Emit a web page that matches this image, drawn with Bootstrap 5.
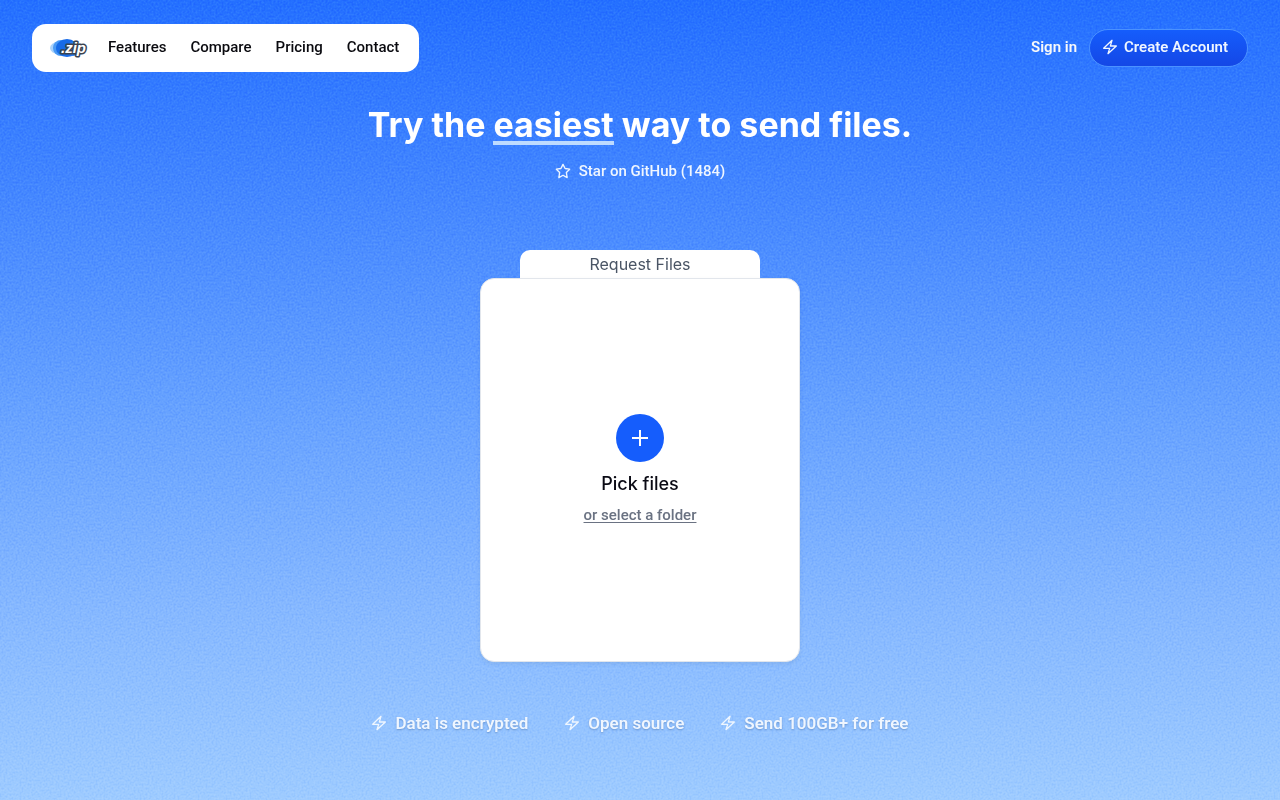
<!DOCTYPE html>
<html lang="en">
<head>
<meta charset="utf-8">
<meta name="viewport" content="width=device-width, initial-scale=1">
<title>.zip – send files</title>
<link href="https://cdn.jsdelivr.net/npm/bootstrap@5.3.0/dist/css/bootstrap.min.css" rel="stylesheet">
<style>
  body {
    font-family: Inter, "Liberation Sans", sans-serif;
    font-size: 14px;
    line-height: 20px;
    background: linear-gradient(#2470ff 0%, #4185ff 22%, #65a1ff 50%, #86b8ff 76%, #9ecbff 100%) no-repeat #9ecbff;
  }
  .grain { z-index: -1; opacity: .18; mix-blend-mode: soft-light; }
  .page-bar { padding: 24px 32px 0; }
  .menu-pill { height: 48px; padding: 0 20px 2px 18px; border-radius: 14px; gap: 24px; }
  .menu-pill a { color: #0a0a0f; font-family: Roboto, sans-serif; font-size: 15px; font-weight: 500; text-decoration: none; }
  .menu-pill .logo { margin-right: -4px; }
  .sign-in { padding-bottom: 2px; font-family: Roboto, sans-serif; font-size: 15px; font-weight: 600; }
  .btn-account {
    height: 38px; padding: 0 19px 2px 12px; border-radius: 19px; gap: 6px;
    color: #eff6ff; font-family: Roboto, sans-serif; font-size: 15px; font-weight: 600;
    border: 1px solid #4b92ff; background: linear-gradient(#155dfc, #1447e6);
  }
  .btn-account:hover { color: #fff; border-color: #8ec5ff; background: #155dfc; }
  .headline { font-family: Inter, sans-serif; font-size: 34px; line-height: 40px; font-weight: 700; margin: 33px 0 0; }
  .swash { background: linear-gradient(#bedbff, #bedbff) 0 100% / 100% 4px no-repeat; }
  .star-link { margin-top: 16px; gap: 8px; color: #eff6ff; font-family: Roboto, sans-serif; font-size: 15px; font-weight: 500; }
  .uploader { width: 320px; margin-top: 69px; }
  .tab-request {
    width: 240px; height: 28px; padding: 0; color: #4a5565;
    font-size: 16px; line-height: 28px; background: #fff; border: 0; border-radius: 10px 10px 0 0;
  }
  .drop-card { height: 384px; border: 1px solid #e2e6ec; border-radius: 14px; padding-bottom: 2px; }
  .btn-plus { width: 48px; height: 48px; color: #fff; background: #155dfc; border: 0; }
  .pick-title { margin: 8px 0 0; color: #0a0a14; font-size: 18px; line-height: 28px; font-weight: 500; }
  .folder-link { margin-top: 7px; color: #6a7282; font-family: Roboto, sans-serif; font-size: 15px; font-weight: 500; background: none; border: 0; padding: 0; text-decoration: underline; text-underline-offset: 2px; }
  .perks { margin: 49px 0 64px; gap: 36px; color: #eff6ff; font-family: Roboto, sans-serif; font-size: 17px; line-height: 24px; font-weight: 600; text-shadow: 0 1px 2px rgba(20, 60, 120, .35); }
  .perks li { gap: 8px; }
</style>
</head>
<body class="min-vh-100">
<svg class="grain position-fixed top-0 start-0 w-100 h-100" aria-hidden="true">
  <filter id="grain" x="0" y="0" width="100%" height="100%" color-interpolation-filters="sRGB">
    <feTurbulence type="fractalNoise" baseFrequency=".5" numOctaves="3" stitchTiles="stitch"/>
    <feColorMatrix values="2 0 0 0 -.5  2 0 0 0 -.5  2 0 0 0 -.5  0 0 0 0 1"/>
  </filter>
  <rect width="100%" height="100%" filter="url(#grain)"/>
</svg>
<svg class="d-none" aria-hidden="true">
  <symbol id="bolt" viewBox="0 0 24 24" fill="none" stroke="currentColor" stroke-width="2" stroke-linecap="round" stroke-linejoin="round"><path d="M2.500 14L15 2l-2.500 8.500h9L9 22l2.500-8z"/></symbol>
</svg>

<header class="page-bar d-flex flex-wrap align-items-center justify-content-between">
  <nav class="menu-pill bg-white d-flex align-items-center" aria-label="Main">
    <a class="logo d-flex" href="#" aria-label=".zip">
      <svg width="38" height="22" viewBox="0 0 38 22">
        <ellipse cx="8" cy="12" rx="8" ry="6" fill="#a9d2fb"/>
        <ellipse cx="11" cy="12" rx="8" ry="8" fill="#4a9af5"/>
        <ellipse cx="17" cy="12" rx="11" ry="9" fill="#176be8"/>
        <ellipse cx="23" cy="13" rx="7" ry="7" fill="#2b7cf0"/>
        <text x="11" y="17" font-family="Liberation Sans, sans-serif" font-size="15" font-weight="700" font-style="italic" fill="#fff" stroke="#3a4250" stroke-width="3" stroke-linejoin="round" paint-order="stroke">.zip</text>
      </svg>
    </a>
    <a href="#">Features</a>
    <a href="#">Compare</a>
    <a href="#">Pricing</a>
    <a href="#">Contact</a>
  </nav>
  <div class="d-flex align-items-center gap-2">
    <a class="sign-in link-light text-decoration-none me-1" href="#">Sign in</a>
    <button type="button" class="btn btn-account d-flex align-items-center">
      <svg width="16" height="16" aria-hidden="true"><use href="#bolt"/></svg>Create Account
    </button>
  </div>
</header>

<main class="d-flex flex-column align-items-center px-3">
  <h1 class="headline text-white text-center">Try the <span class="swash">easiest</span> way to send files.</h1>
  <a class="star-link d-flex align-items-center text-decoration-none" href="#">
    <svg width="16" height="16" viewBox="0 0 24 24" fill="none" stroke="currentColor" stroke-width="2" stroke-linejoin="round" aria-hidden="true"><path d="M12 2l3.100 6.300 6.900 1-5 4.900 1.200 7.800-6.200-3.600-6.200 3.600L7 14.200l-5-4.900 6.900-1z"/></svg>
    Star on GitHub (1484)
  </a>

  <section class="uploader mw-100 d-flex flex-column align-items-center">
    <button type="button" class="tab-request">Request Files</button>
    <div class="drop-card w-100 bg-white shadow-sm d-flex flex-column align-items-center justify-content-center">
      <button type="button" class="btn-plus rounded-circle d-flex align-items-center justify-content-center p-0" aria-label="Add files">
        <svg width="24" height="24" viewBox="0 0 24 24" fill="none" stroke="currentColor" stroke-width="2" aria-hidden="true"><path d="M4 12h16M12 4v16"/></svg>
      </button>
      <h2 class="pick-title">Pick files</h2>
      <button type="button" class="folder-link">or select a folder</button>
    </div>
  </section>

  <ul class="perks list-unstyled d-flex flex-wrap justify-content-center">
    <li class="d-flex align-items-center"><svg width="16" height="16" aria-hidden="true"><use href="#bolt"/></svg>Data is encrypted</li>
    <li class="d-flex align-items-center"><svg width="16" height="16" aria-hidden="true"><use href="#bolt"/></svg>Open source</li>
    <li class="d-flex align-items-center"><svg width="16" height="16" aria-hidden="true"><use href="#bolt"/></svg>Send 100GB+ for free</li>
  </ul>
</main>
<script src="https://cdn.jsdelivr.net/npm/bootstrap@5.3.0/dist/js/bootstrap.bundle.min.js"></script>
</body>
</html>
